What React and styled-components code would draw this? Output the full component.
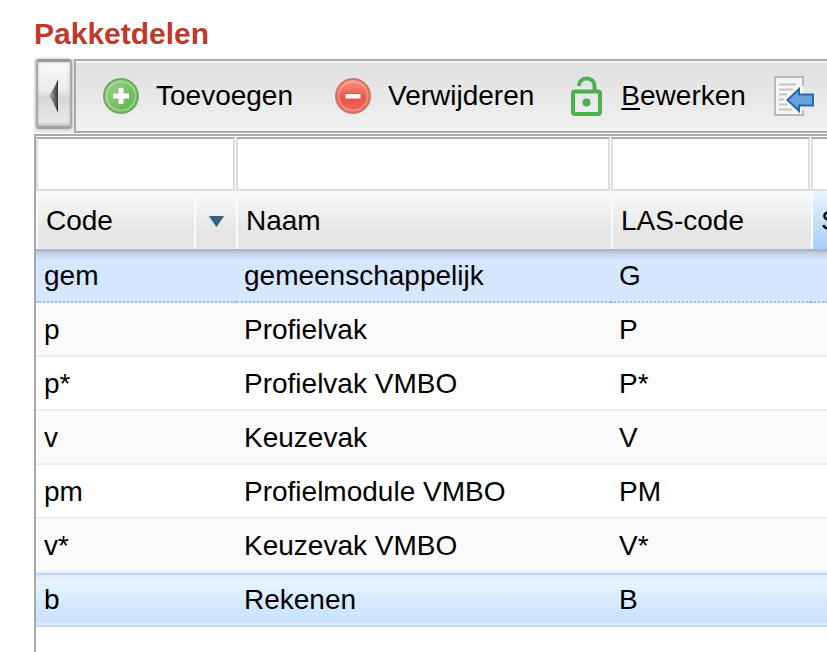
import React, { useState } from "react";
import styled, { createGlobalStyle, css } from "styled-components";

const GlobalStyle = createGlobalStyle`
  * {
    box-sizing: border-box;
  }

  body {
    margin: 0;
    background: #fff;
    color: #000;
    font: 28px/32px "Liberation Sans", Arial, sans-serif;
    overflow: hidden;
  }
`;

const Page = styled.main`
  display: flex;
  flex-direction: column;
  min-height: 100vh;
  padding: 16px 0 0 34px;
`;

const Title = styled.h1`
  margin: 0 0 7px;
  color: #c0392b;
  font-size: 30px;
  line-height: 36px;
`;

const Bar = styled.div`
  display: flex;
  height: 74px;
  margin-bottom: 1px;
  background: #ededed;
`;

const Collapse = styled.button`
  display: flex;
  align-items: center;
  justify-content: center;
  flex: none;
  width: 36px;
  height: 70px;
  margin: 0 2px;
  padding: 4px 0 0;
  border: 2px solid #aaa;
  border-top: 3px solid #999;
  border-bottom: 3px solid #a0a0a0;
  border-radius: 3px;
  background: linear-gradient(#fafafa, #ebebeb 45%, #d6d6da 55%, #e9e9ec 92%, #c8c8c8);
  box-shadow: 0 0 3px #a4a4a4, inset 0 0 3px #bbb;
`;

const Toolbar = styled.div`
  display: flex;
  align-items: center;
  gap: 28px;
  flex: 1;
  min-width: 0;
  overflow: hidden;
  padding-left: 13px;
  border: 2px solid #a9a9a9;
  border-right: 0;
  background: linear-gradient(#dfdfdf, #f1f1f1);
  box-shadow: inset 0 2px #fbf3f5;
`;

const ToolButton = styled.button`
  display: flex;
  align-items: center;
  gap: 16px;
  flex: none;
  padding: 0;
  border: 0;
  background: none;
  color: inherit;
  font: inherit;
`;

const Underlined = styled.span`
  text-decoration: underline;
  text-decoration-thickness: 2px;
  text-underline-offset: 3px;
`;

const Panel = styled.section`
  flex: 1;
  border: 2px solid #a9a9a9;
  border-right: 0;
  border-bottom: 0;
  padding-top: 1px;
`;

const Grid = styled.table`
  width: 100%;
  table-layout: fixed;
  border-collapse: separate;
  border-spacing: 0;
`;

const Col = styled.col`
  width: ${props => (props.$width ? `${props.$width}px` : "auto")};
`;

const FilterCell = styled.td`
  height: 54px;
  padding: 0 1px 0 0;
`;

const FilterInput = styled.input`
  display: block;
  width: 100%;
  height: 54px;
  padding: 0 8px;
  border: 2px solid #ddd;
  border-top-color: #a9a9a9;
  border-radius: 0;
  outline: 0;
  background: #fff;
  font: inherit;
`;

const HeadCell = styled.th`
  height: 58px;
  padding: 0;
  border-left: 2px solid #fafafa;
  overflow: hidden;
  font-weight: normal;
  background: ${props =>
    props.$active
      ? "linear-gradient(#ebf3fd, #a6cdf8)"
      : "linear-gradient(#fafafa, #e6e6e6 70%, #e6e6e6)"};
`;

const HeadContent = styled.div`
  display: flex;
  height: 58px;
`;

const SortButton = styled.button`
  flex: 1;
  padding: 2px 8px 0;
  border: 0;
  background: none;
  color: inherit;
  font: inherit;
  text-align: left;
`;

const MenuButton = styled.button`
  display: flex;
  align-items: center;
  justify-content: center;
  flex: none;
  width: 42px;
  padding: 4px 0 0;
  border: 0;
  border-left: 2px solid #fafafa;
  background: none;
`;

const Cell = styled.td`
  height: 54px;
  padding: 2px 8px 0;
  border-bottom: 2px solid #ededed;
  white-space: nowrap;
`;

const Row = styled.tr`
  background: ${props => (props.$striped ? "#fafafa" : "#fff")};

  ${props =>
    props.$state === "focused" &&
    css`
      ${Cell} {
        padding-top: 0;
        border-top: 2px dotted #a3b2d4;
        border-bottom: 2px dotted #a3bae9;
        background: linear-gradient(#b4bdcc 2px, #c6d5eb 5px, #d5e7ff 11px) border-box;
      }
    `}

  ${props =>
    props.$state === "selected" &&
    css`
      ${Cell} {
        padding-top: 0;
        border-top: 2px solid #c0d8fa;
        border-bottom: 2px solid #c0d8fa;
        background: linear-gradient(#e1ebfa 4px, #e7f4ff 5px, #c8e1fd 47px, #e1ebfa 48px);
      }
    `}
`;

const PlusIcon = () => (
  <svg width="51" height="48" viewBox="-3 0 51 48" aria-hidden="true">
    <defs>
      <linearGradient id="green" x1="0" y1="0" x2="1" y2="1">
        <stop offset="0" stopColor="#a2d68f" />
        <stop offset="1" stopColor="#55ad45" />
      </linearGradient>
    </defs>
    <circle cx="29" cy="24" r="17" fill="url(#green)" stroke="#6fab66" strokeWidth="2" />
    <circle cx="29" cy="24" r="14.500" fill="none" stroke="#b4dfa5" strokeWidth="2" opacity="0.6" />
    <path d="M26.500 16h5v5.500h5.500v5h-5.500v5.500h-5v-5.500h-5.500v-5h5.500z" fill="#fff" />
  </svg>
);

const MinusIcon = () => (
  <svg width="51" height="48" viewBox="-3 0 51 48" aria-hidden="true">
    <defs>
      <linearGradient id="red" x1="0" y1="0" x2="0" y2="1">
        <stop offset="0" stopColor="#f89c8d" />
        <stop offset="0.55" stopColor="#ea5545" />
        <stop offset="1" stopColor="#ed6a5a" />
      </linearGradient>
    </defs>
    <circle cx="29" cy="24" r="17" fill="url(#red)" stroke="#d0776c" strokeWidth="2" />
    <circle cx="29" cy="24" r="14.500" fill="none" stroke="#f8aa9c" strokeWidth="2" opacity="0.6" />
    <path d="M21 21.500h16v5.500H21z" fill="#fff" stroke="#d95a4b" strokeWidth="1" />
  </svg>
);

const LockIcon = () => (
  <svg width="43" height="42" viewBox="-3 0 43 42" aria-hidden="true">
    <g fill="none" stroke="#4caf50" strokeWidth="4">
      <rect x="8" y="16.500" width="27" height="22.500" rx="2" />
      <path d="M14 11c0-4.500 3-7.500 7.500-7.500s8 3 8 7.500v5.500" />
    </g>
    <circle cx="21.500" cy="27.500" r="4" fill="#4caf50" />
  </svg>
);

const ImportIcon = () => (
  <svg width="40" height="40" viewBox="0 0 40 40" aria-hidden="true">
    <path d="M29 10V1H1v38h28v-5" fill="#f5f5f5" stroke="#b9b9b9" strokeWidth="2" />
    <path
      d="M5 8.500h17M5 13.500h14M5 18.500h8M5 23.500h5M5 28.500h8M5 33.500h13"
      stroke="#c6c6c6"
      strokeWidth="2"
    />
    <path d="M13.500 24L25 13v5.500h14v11H25V35z" fill="#67a2dc" stroke="#2867ab" strokeWidth="2" />
  </svg>
);

const CollapseIcon = () => (
  <svg width="12" height="36" viewBox="0 0 12 36" aria-hidden="true">
    <defs>
      <linearGradient id="arrow">
        <stop offset="0" stopColor="#bbb" />
        <stop offset="1" stopColor="#333" />
      </linearGradient>
    </defs>
    <path d="M10 1v34L6 26 1 18l6-10z" fill="url(#arrow)" />
  </svg>
);

const MenuIcon = () => (
  <svg width="18" height="14" viewBox="0 0 18 14" aria-hidden="true">
    <path d="M1 1h16v2L9 14 1 3z" fill="#d5e2ec" />
    <path d="M2 1h15L9.500 12z" fill="#3c617d" />
  </svg>
);

const columns = [
  { label: "Code", width: 200, menu: true },
  { label: "Naam", width: 375 },
  { label: "LAS-code", width: 200 },
  { label: "S", active: true },
];

const rows = [
  { code: "gem", name: "gemeenschappelijk", las: "G", state: "focused" },
  { code: "p", name: "Profielvak", las: "P" },
  { code: "p*", name: "Profielvak VMBO", las: "P*" },
  { code: "v", name: "Keuzevak", las: "V" },
  { code: "pm", name: "Profielmodule VMBO", las: "PM" },
  { code: "v*", name: "Keuzevak VMBO", las: "V*" },
  { code: "b", name: "Rekenen", las: "B", state: "selected" },
];

const Filter = ({ label }) => {
  const [value, setValue] = useState("");
  return (
    <FilterInput
      aria-label={`Filter ${label}`}
      value={value}
      onChange={e => setValue(e.target.value)}
    />
  );
};

const App = () => (
  <>
    <GlobalStyle />
    <Page>
      <Title>Pakketdelen</Title>
      <Bar>
        <Collapse type="button" aria-label="Inklappen">
          <CollapseIcon />
        </Collapse>
        <Toolbar role="toolbar">
          <ToolButton type="button">
            <PlusIcon />
            Toevoegen
          </ToolButton>
          <ToolButton type="button">
            <MinusIcon />
            Verwijderen
          </ToolButton>
          <ToolButton type="button">
            <LockIcon />
            <span>
              <Underlined>B</Underlined>ewerken
            </span>
          </ToolButton>
          <ToolButton type="button" aria-label="Importeren">
            <ImportIcon />
          </ToolButton>
        </Toolbar>
      </Bar>
      <Panel>
        <Grid>
          <colgroup>
            {columns.map(column => (
              <Col key={column.label} $width={column.width} />
            ))}
          </colgroup>
          <thead>
            <tr>
              {columns.map(column => (
                <FilterCell key={column.label}>
                  <Filter label={column.label} />
                </FilterCell>
              ))}
            </tr>
            <tr>
              {columns.map(column => (
                <HeadCell key={column.label} scope="col" $active={column.active}>
                  <HeadContent>
                    <SortButton type="button">{column.label}</SortButton>
                    {column.menu && (
                      <MenuButton type="button" aria-label="Kolommenu">
                        <MenuIcon />
                      </MenuButton>
                    )}
                  </HeadContent>
                </HeadCell>
              ))}
            </tr>
          </thead>
          <tbody>
            {rows.map((row, index) => (
              <Row key={row.code} $striped={index % 2 === 1} $state={row.state}>
                <Cell>{row.code}</Cell>
                <Cell>{row.name}</Cell>
                <Cell>{row.las}</Cell>
                <Cell />
              </Row>
            ))}
          </tbody>
        </Grid>
      </Panel>
    </Page>
  </>
);

export default App;
